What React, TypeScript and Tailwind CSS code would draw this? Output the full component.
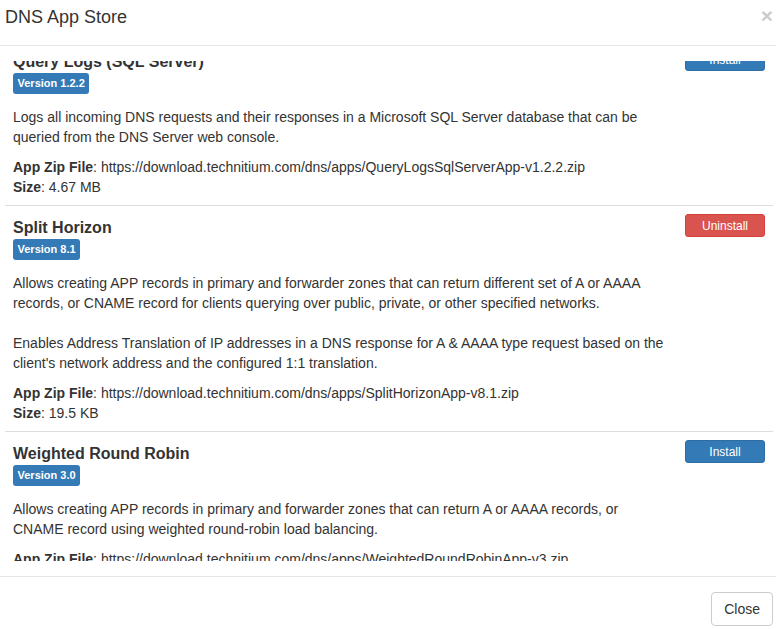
import React from 'react';

type AppItem = {
  name: string;
  version: string;
  description: string[];
  zipUrl: string;
  size: string;
  installed: boolean;
};

const APPS: AppItem[] = [
  {
    name: 'Query Logs (SQL Server)',
    version: '1.2.2',
    description: [
      'Logs all incoming DNS requests and their responses in a Microsoft SQL Server database that can be queried from the DNS Server web console.',
    ],
    zipUrl: 'https://download.technitium.com/dns/apps/QueryLogsSqlServerApp-v1.2.2.zip',
    size: '4.67 MB',
    installed: false,
  },
  {
    name: 'Split Horizon',
    version: '8.1',
    description: [
      'Allows creating APP records in primary and forwarder zones that can return different set of A or AAAA records, or CNAME record for clients querying over public, private, or other specified networks.',
      "Enables Address Translation of IP addresses in a DNS response for A & AAAA type request based on the client's network address and the configured 1:1 translation.",
    ],
    zipUrl: 'https://download.technitium.com/dns/apps/SplitHorizonApp-v8.1.zip',
    size: '19.5 KB',
    installed: true,
  },
  {
    name: 'Weighted Round Robin',
    version: '3.0',
    description: [
      'Allows creating APP records in primary and forwarder zones that can return A or AAAA records, or CNAME record using weighted round-robin load balancing.',
    ],
    zipUrl: 'https://download.technitium.com/dns/apps/WeightedRoundRobinApp-v3.zip',
    size: '16.2 KB',
    installed: false,
  },
];

function AppRow({ app }: { app: AppItem }) {
  return (
    <div className="flex justify-between border-b border-[#ddd] px-[8px] pt-[8px] pb-[8px]">
      <div className="w-[656px]">
        <div className="pt-[2px] text-[16px] font-bold leading-[23px]">{app.name}</div>
        <div className="flex">
          <span className="flex h-[21px] items-center rounded-[3px] bg-[#337ab7] px-[4.5px] text-[11px] leading-none font-bold text-white">
            Version {app.version}
          </span>
        </div>
        <p className="mt-[13px] mb-[10px] text-[14px] leading-[20px]">
          {app.description.map((d, i) => (
            <React.Fragment key={i}>
              {i > 0 && (
                <>
                  <br />
                  <br />
                </>
              )}
              {d}
            </React.Fragment>
          ))}
        </p>
        <p className="text-[14px] leading-[20px]">
          <b>App Zip File</b>: {app.zipUrl}
          <br />
          <b>Size</b>: {app.size}
        </p>
      </div>
      <div>
        {app.installed ? (
          <button className="flex h-[23px] w-[80px] items-center justify-center rounded-[3px] border border-[#d43f3a] bg-[#d9534f] text-[12px] text-white">
            Uninstall
          </button>
        ) : (
          <button className="flex h-[23px] w-[80px] items-center justify-center rounded-[3px] border border-[#2e6da4] bg-[#337ab7] text-[12px] text-white">
            Install
          </button>
        )}
      </div>
    </div>
  );
}

export default function App() {
  return (
    <div
      className="relative h-[629px] w-[776px] overflow-hidden bg-white text-[#333]"
      style={{ fontFamily: '"Liberation Sans", Arial, Helvetica, sans-serif' }}
    >
      <div className="-mt-[10px] -ml-[10px] w-[798px] bg-white">
        {/* header */}
        <div className="flex items-start justify-between border-b border-[#e5e5e5] p-[15px]">
          <h4 className="text-[18px] leading-[25px]">DNS App Store</h4>
          <button className="text-[21px] font-bold leading-none text-black opacity-20">×</button>
        </div>

        {/* body */}
        <div className="p-[15px]">
          <div className="h-[500px] overflow-hidden">
            <div className="-mt-[21px]">
              {APPS.map((app) => (
                <AppRow key={app.name} app={app} />
              ))}
            </div>
          </div>
        </div>

        {/* footer */}
        <div className="flex justify-end border-t border-[#e5e5e5] p-[15px]">
          <button className="rounded-[4px] border border-[#ccc] bg-white px-[12px] py-[6px] text-[14px] leading-[20px] text-[#333]">
            Close
          </button>
        </div>
      </div>
    </div>
  );
}
